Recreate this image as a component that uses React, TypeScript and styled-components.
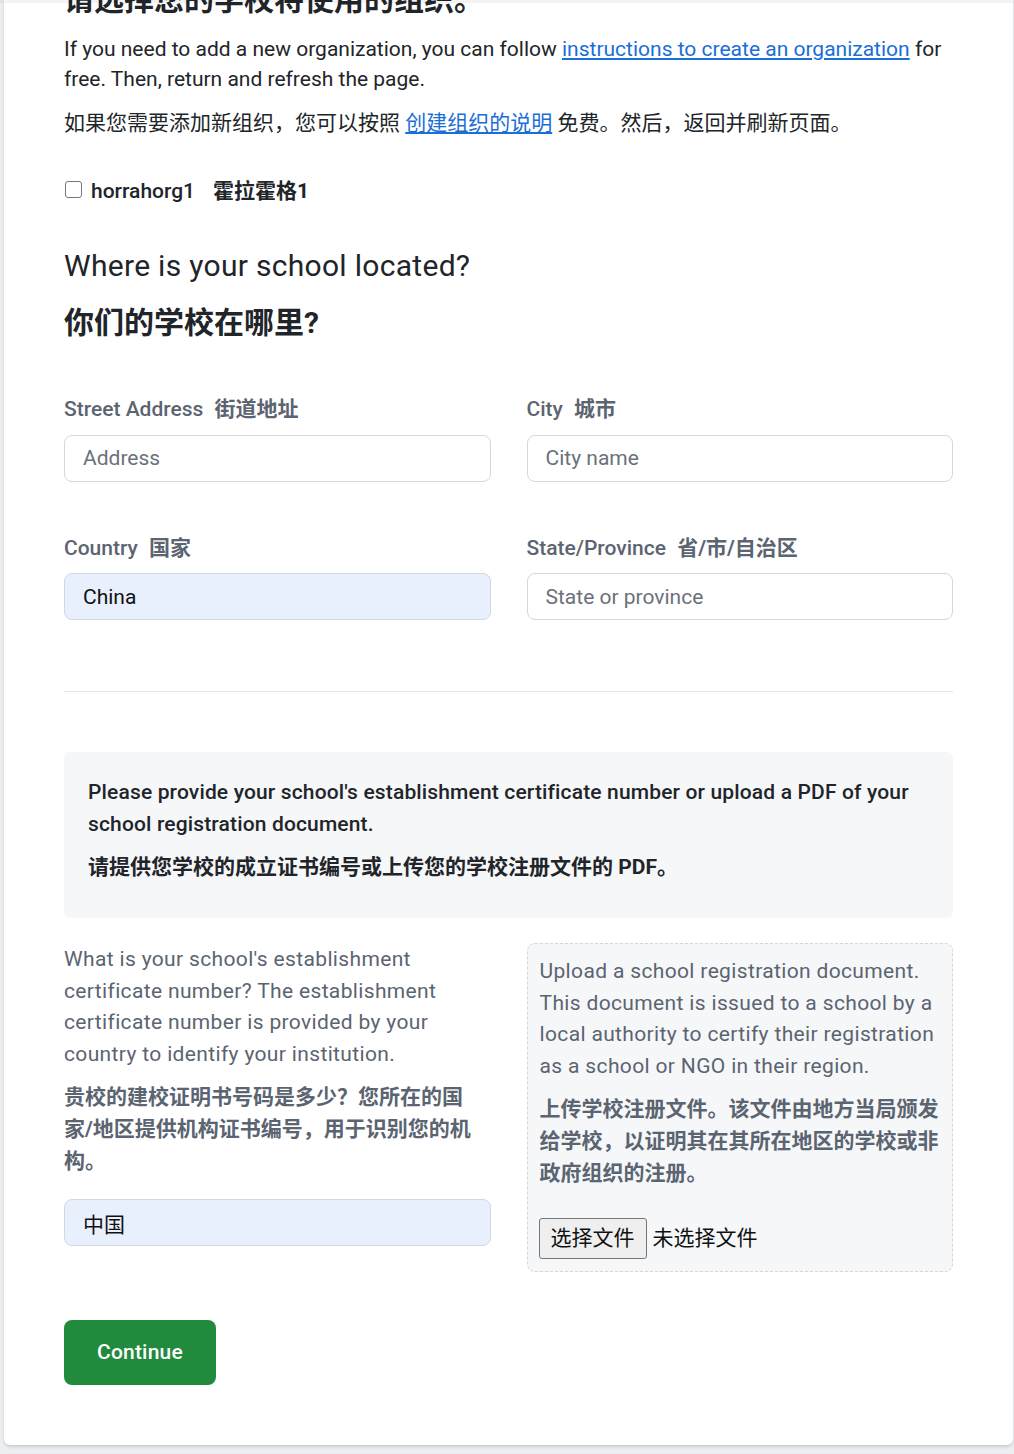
import React from "react"
import styled, { createGlobalStyle } from "styled-components"

const GlobalStyle = createGlobalStyle`
  html, body {
    margin: 0;
    background: #eceef1;
  }
  body {
    font-family: Roboto, "Noto Sans CJK SC", sans-serif;
    color: #212529;
    font-size: 21px;
    line-height: 1.5;
  }
  * {
    box-sizing: border-box;
  }
`

export default function App() {
  return (
    <Page>
      <GlobalStyle />
      <TopShade />
      <Card>
        <CutHeading>请选择您的学校将使用的组织。</CutHeading>
        <Intro>
          If you need to add a new organization, you can follow{" "}
          <Link href="#">instructions to create an organization</Link> for
          free. Then, return and refresh the page.
        </Intro>
        <Intro>
          如果您需要添加新组织，您可以按照 <Link href="#">创建组织的说明</Link>{" "}
          免费。然后，返回并刷新页面。
        </Intro>

        <CheckRow>
          <Checkbox type="checkbox" />
          <OrgName>horrahorg1</OrgName>
          <Zh>霍拉霍格1</Zh>
        </CheckRow>

        <H3>Where is your school located?</H3>
        <H3Zh>你们的学校在哪里?</H3Zh>

        <FieldGrid>
          <Field>
            <Label>
              Street Address <Zh>街道地址</Zh>
            </Label>
            <Input placeholder="Address" />
          </Field>
          <Field>
            <Label>
              City <Zh>城市</Zh>
            </Label>
            <Input placeholder="City name" />
          </Field>
          <Field>
            <Label>
              Country <Zh>国家</Zh>
            </Label>
            <Input defaultValue="China" $filled />
          </Field>
          <Field>
            <Label>
              State/Province <Zh>省/市/自治区</Zh>
            </Label>
            <Input placeholder="State or province" />
          </Field>
        </FieldGrid>

        <Divider />

        <Notice>
          <NoticeText>
            Please provide your school's establishment certificate number or
            upload a PDF of your school registration document.
          </NoticeText>
          <NoticeZh>请提供您学校的成立证书编号或上传您的学校注册文件的 PDF。</NoticeZh>
        </Notice>

        <Columns>
          <Column>
            <Help>
              What is your school's establishment certificate number? The
              establishment certificate number is provided by your country to
              identify your institution.
            </Help>
            <HelpZh>
              贵校的建校证明书号码是多少？您所在的国家/地区提供机构证书编号，用于识别您的机构。
            </HelpZh>
            <Input defaultValue="中国" $filled $top={22} />
          </Column>
          <Upload>
            <Help>
              Upload a school registration document. This document is issued to
              a school by a local authority to certify their registration as a
              school or NGO in their region.
            </Help>
            <HelpZh>
              上传学校注册文件。该文件由地方当局颁发给学校，以证明其在其所在地区的学校或非政府组织的注册。
            </HelpZh>
            <FileRow>
              <FileButton type="button">选择文件</FileButton>
              <span>未选择文件</span>
            </FileRow>
          </Upload>
        </Columns>

        <Continue type="button">Continue</Continue>
      </Card>
    </Page>
  )
}

const Page = styled.div`
  padding: 0 1px 9px 4px;
`
const TopShade = styled.div`
  position: fixed;
  top: 0;
  left: 0;
  right: 0;
  height: 3px;
  background: rgba(0, 0, 0, 0.045);
  z-index: 5;
`
const Card = styled.div`
  background: #fff;
  border-radius: 0 0 6px 6px;
  box-shadow: 0 2px 3px rgba(0, 0, 0, 0.14);
  padding: 0 60px 60px;
  overflow: hidden;
`
const CutHeading = styled.h2`
  margin: -18px 0 16px;
  font-size: 30px;
  line-height: 36px;
  font-weight: 700;
`
const Intro = styled.p`
  margin: 0 0 14px;
  font-size: 21px;
  line-height: 30px;
`
const Link = styled.a`
  color: #1a6ed8;
  text-decoration: underline;
`
const Zh = styled.strong`
  font-weight: 700;
  margin-left: 6px;
`
const CheckRow = styled.label`
  display: flex;
  align-items: center;
  margin-top: 38px;
  font-size: 21px;
  line-height: 30px;
`
const Checkbox = styled.input`
  appearance: none;
  flex: none;
  width: 17px;
  height: 17px;
  margin: 0 9px 0 1px;
  border: 1px solid #767676;
  border-radius: 3px;
  background: #fff;
  position: relative;
  top: -2px;
`
const OrgName = styled.span`
  font-weight: 500;
  margin-right: 12px;
`
const H3 = styled.h3`
  margin: 42px 0 0;
  font-size: 30px;
  line-height: 36px;
  font-weight: 400;
  letter-spacing: 0.3px;
`
const H3Zh = styled(H3)`
  margin-top: 21px;
  font-weight: 700;
  letter-spacing: normal;
`
const FieldGrid = styled.div`
  display: grid;
  grid-template-columns: 1fr 1fr;
  column-gap: 36px;
  row-gap: 51px;
  margin-top: 53px;
`
const Field = styled.div`
  display: flex;
  flex-direction: column;
  gap: 9px;
`
const Label = styled.label`
  color: #5b6471;
  font-weight: 500;
  line-height: 31.5px;
`
const Input = styled.input<{ $filled?: boolean; $top?: number }>`
  width: 100%;
  height: 47px;
  margin-top: ${(p) => p.$top ?? 0}px;
  padding: 7px 18px;
  font: inherit;
  font-size: 21px;
  color: #111;
  border: 1px solid #d2d8df;
  border-radius: 8px;
  background: ${(p) => (p.$filled ? "#e8f0fe" : "#fff")};
  outline: none;
  &::placeholder {
    color: #6a717a;
  }
`
const Divider = styled.hr`
  margin: 71px 0 60px;
  border: 0;
  border-top: 1px solid #e3e5e8;
`
const Notice = styled.div`
  background: #f6f7f9;
  border-radius: 6px;
  padding: 24px 24px 24px;
`
const NoticeText = styled.p`
  margin: 0 0 11px;
  font-weight: 500;
  letter-spacing: 0.15px;
  line-height: 32px;
`
const NoticeZh = styled.p`
  margin: 0 0 11px;
  font-weight: 700;
  line-height: 32px;
`
const Columns = styled.div`
  display: grid;
  grid-template-columns: 1fr 1fr;
  column-gap: 36px;
  align-items: start;
  margin-top: 25px;
`
const Column = styled.div`
  display: flex;
  flex-direction: column;
  padding-top: 1px;
`
const Help = styled.p`
  margin: 0;
  color: #5b6471;
  letter-spacing: 0.35px;
  line-height: 31.6px;
`
const HelpZh = styled(Help)`
  margin-top: 12px;
  font-weight: 700;
  letter-spacing: normal;
`
const Upload = styled.div`
  background: #f6f7f9;
  border: 1px dashed #d3d7dc;
  border-radius: 8px;
  padding: 12px 12px 12px;
`
const FileRow = styled.div`
  display: flex;
  align-items: center;
  gap: 6px;
  margin-top: 29px;
  margin-left: -1px;
  color: #111;
`
const FileButton = styled.button`
  height: 41px;
  padding: 0 11px;
  font: inherit;
  font-size: 21px;
  color: #111;
  background: #efefef;
  border: 1px solid #767676;
  border-radius: 3px;
`
const Continue = styled.button`
  display: block;
  margin-top: 48px;
  height: 65px;
  padding: 0 33px;
  font: inherit;
  font-size: 21px;
  font-weight: 500;
  letter-spacing: 0.2px;
  color: #fff;
  background: #208a3d;
  border: none;
  border-radius: 8px;
`
